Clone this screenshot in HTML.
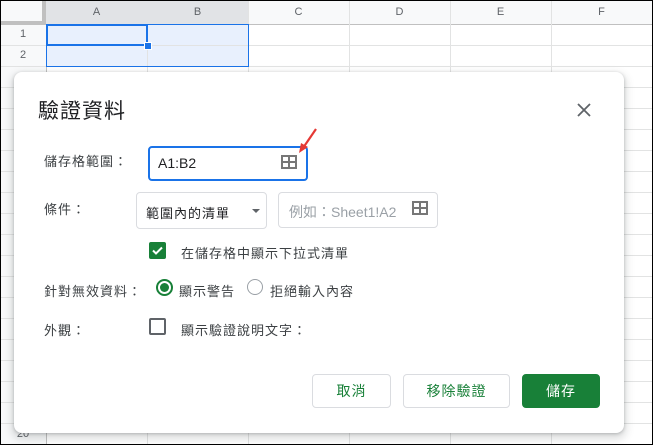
<!DOCTYPE html><html><head><meta charset="utf-8"><style>
body{margin:0;width:653px;height:445px;position:relative;overflow:hidden;font-family:"Liberation Sans","Noto Sans CJK TC",sans-serif;background:#fff;color:#3c4043}
.a{position:absolute}
.hl{position:absolute;left:0;width:653px;height:1px;background:#e2e3e3}
.vl{position:absolute;top:0;height:445px;width:1px;background:#e2e3e3}
.ch{position:absolute;top:0;height:24px;line-height:24px;text-align:center;font-size:11px;color:#5f6368}
.rh{position:absolute;left:0;width:46px;text-align:center;font-size:11px;color:#5f6368}
.lab{position:absolute;font-size:13px;color:#3c4043;letter-spacing:1px}
.btn{position:absolute;top:374px;height:34px;border:1px solid #dadce0;border-radius:4px;box-sizing:border-box;text-align:center;line-height:32px;font-size:14px;color:#188038;background:#fff;letter-spacing:1px}
</style></head><body>
<div class="a" style="left:0;top:0;width:46px;height:445px;background:#f8f9fa"></div>
<div class="a" style="left:0;top:0;width:653px;height:24px;background:#f8f9fa"></div>
<div class="a" style="left:46px;top:24px;width:202px;height:42px;background:#e8f0fd"></div>
<div class="hl" style="top:24px;background:#c0c0c0"></div>
<div class="hl" style="top:45px"></div><div class="hl" style="top:66px"></div><div class="hl" style="top:87px"></div><div class="hl" style="top:108px"></div><div class="hl" style="top:129px"></div><div class="hl" style="top:150px"></div><div class="hl" style="top:171px"></div><div class="hl" style="top:192px"></div><div class="hl" style="top:213px"></div><div class="hl" style="top:234px"></div><div class="hl" style="top:255px"></div><div class="hl" style="top:276px"></div><div class="hl" style="top:297px"></div><div class="hl" style="top:318px"></div><div class="hl" style="top:339px"></div><div class="hl" style="top:360px"></div><div class="hl" style="top:381px"></div><div class="hl" style="top:402px"></div><div class="hl" style="top:423px"></div>
<div class="vl" style="left:46px;background:#c0c0c0"></div><div class="vl" style="left:147px"></div><div class="vl" style="left:248px"></div><div class="vl" style="left:349px"></div><div class="vl" style="left:450px"></div><div class="vl" style="left:551px"></div>
<div class="a" style="left:42px;top:0;width:4px;height:24px;background:#c0c0c0"></div>
<div class="a" style="left:0;top:21px;width:46px;height:3px;background:#c0c0c0"></div>
<div class="ch" style="left:46px;width:101px;background:#e1e3e6">A</div><div class="ch" style="left:147px;width:101px;background:#e1e3e6">B</div><div class="ch" style="left:248px;width:101px">C</div><div class="ch" style="left:349px;width:101px">D</div><div class="ch" style="left:450px;width:101px">E</div><div class="ch" style="left:551px;width:101px">F</div>
<div class="rh" style="top:24px;line-height:21px">1</div><div class="rh" style="top:45px;line-height:21px">2</div>
<div class="rh" style="top:424px;line-height:21px">20</div>
<div class="a" style="left:46px;top:24px;width:201px;height:41px;border:1px solid #1a73e8"></div>
<div class="a" style="left:46px;top:24px;width:98px;height:18px;border:2px solid #1a73e8"></div>
<div class="a" style="left:144px;top:42px;width:6px;height:6px;background:#1a73e8;border:1px solid #fff"></div>
<div class="a" style="left:14px;top:72px;width:610px;height:361px;background:#fff;border-radius:8px;box-shadow:0 4px 8px 3px rgba(60,64,67,.15),0 1px 3px rgba(60,64,67,.3)"></div>
<div class="a" style="left:38px;top:95px;font-size:21px;color:#202124;letter-spacing:1px">驗證資料</div>
<svg class="a" style="left:577px;top:103px" width="14" height="14"><path d="M1 1L13 13M13 1L1 13" stroke="#5f6368" stroke-width="1.8"/></svg>
<div class="lab" style="left:44px;top:151px">儲存格範圍：</div>
<div class="a" style="left:148px;top:146px;width:160px;height:35px;border:2px solid #1a73e8;border-radius:4px;box-sizing:border-box"></div>
<div class="a" style="left:158px;top:155px;font-size:14px;color:#202124">A1:B2</div>
<svg class="a" style="left:281px;top:155px" width="16" height="14"><path d="M1 1h14v12H1zM8 1v12M1 7h14" fill="none" stroke="#777" stroke-width="2"/></svg>
<svg class="a" style="left:296px;top:126px" width="24" height="30"><path d="M20 3L7 22" stroke="#e53935" stroke-width="2.2"/><path d="M3 27L5 17L12 21Z" fill="#e53935"/></svg>
<div class="lab" style="left:44px;top:199px">條件：</div>
<div class="a" style="left:136px;top:192px;width:131px;height:37px;border:1px solid #dadce0;border-radius:4px;box-sizing:border-box"></div>
<div class="a" style="left:146px;top:203px;font-size:13px;color:#202124;letter-spacing:1px">範圍內的清單</div>
<svg class="a" style="left:251px;top:208px" width="10" height="6"><path d="M1 1h8L5 5z" fill="#5f6368"/></svg>
<div class="a" style="left:278px;top:192px;width:160px;height:36px;border:1px solid #dadce0;border-radius:4px;box-sizing:border-box"></div>
<div class="a" style="left:289px;top:202px;font-size:14px;color:#9aa0a6">例如：Sheet1!A2</div>
<svg class="a" style="left:412px;top:201px" width="16" height="14"><path d="M1 1h14v12H1zM8 1v12M1 7h14" fill="none" stroke="#777" stroke-width="2"/></svg>
<div class="a" style="left:149px;top:242px;width:17px;height:17px;background:#188038;border-radius:2px"></div>
<svg class="a" style="left:149px;top:242px" width="17" height="17"><path d="M4 8.5l3 3l6-6" fill="none" stroke="#fff" stroke-width="2"/></svg>
<div class="lab" style="left:181px;top:243px">在儲存格中顯示下拉式清單</div>
<div class="lab" style="left:44px;top:281px">針對無效資料：</div>
<div class="a" style="left:156px;top:279px;width:13px;height:13px;border:2px solid #188038;border-radius:50%"></div>
<div class="a" style="left:160px;top:283px;width:9px;height:9px;background:#188038;border-radius:50%"></div>
<div class="lab" style="left:179px;top:281px">顯示警告</div>
<div class="a" style="left:247px;top:279px;width:14px;height:14px;border:1px solid #9aa0a6;border-radius:50%"></div>
<div class="lab" style="left:270px;top:281px">拒絕輸入內容</div>
<div class="lab" style="left:44px;top:320px">外觀：</div>
<div class="a" style="left:149px;top:318px;width:17px;height:17px;border:2px solid #5f6368;border-radius:2px;box-sizing:border-box"></div>
<div class="lab" style="left:181px;top:320px">顯示驗證說明文字：</div>
<div class="btn" style="left:312px;width:79px">取消</div>
<div class="btn" style="left:403px;width:107px">移除驗證</div>
<div class="btn" style="left:522px;width:78px;background:#188038;border-color:#188038;color:#fff">儲存</div>
<div class="a" style="left:0;top:0;width:653px;height:445px;border:1px solid #000;box-sizing:border-box"></div>
</body></html>
